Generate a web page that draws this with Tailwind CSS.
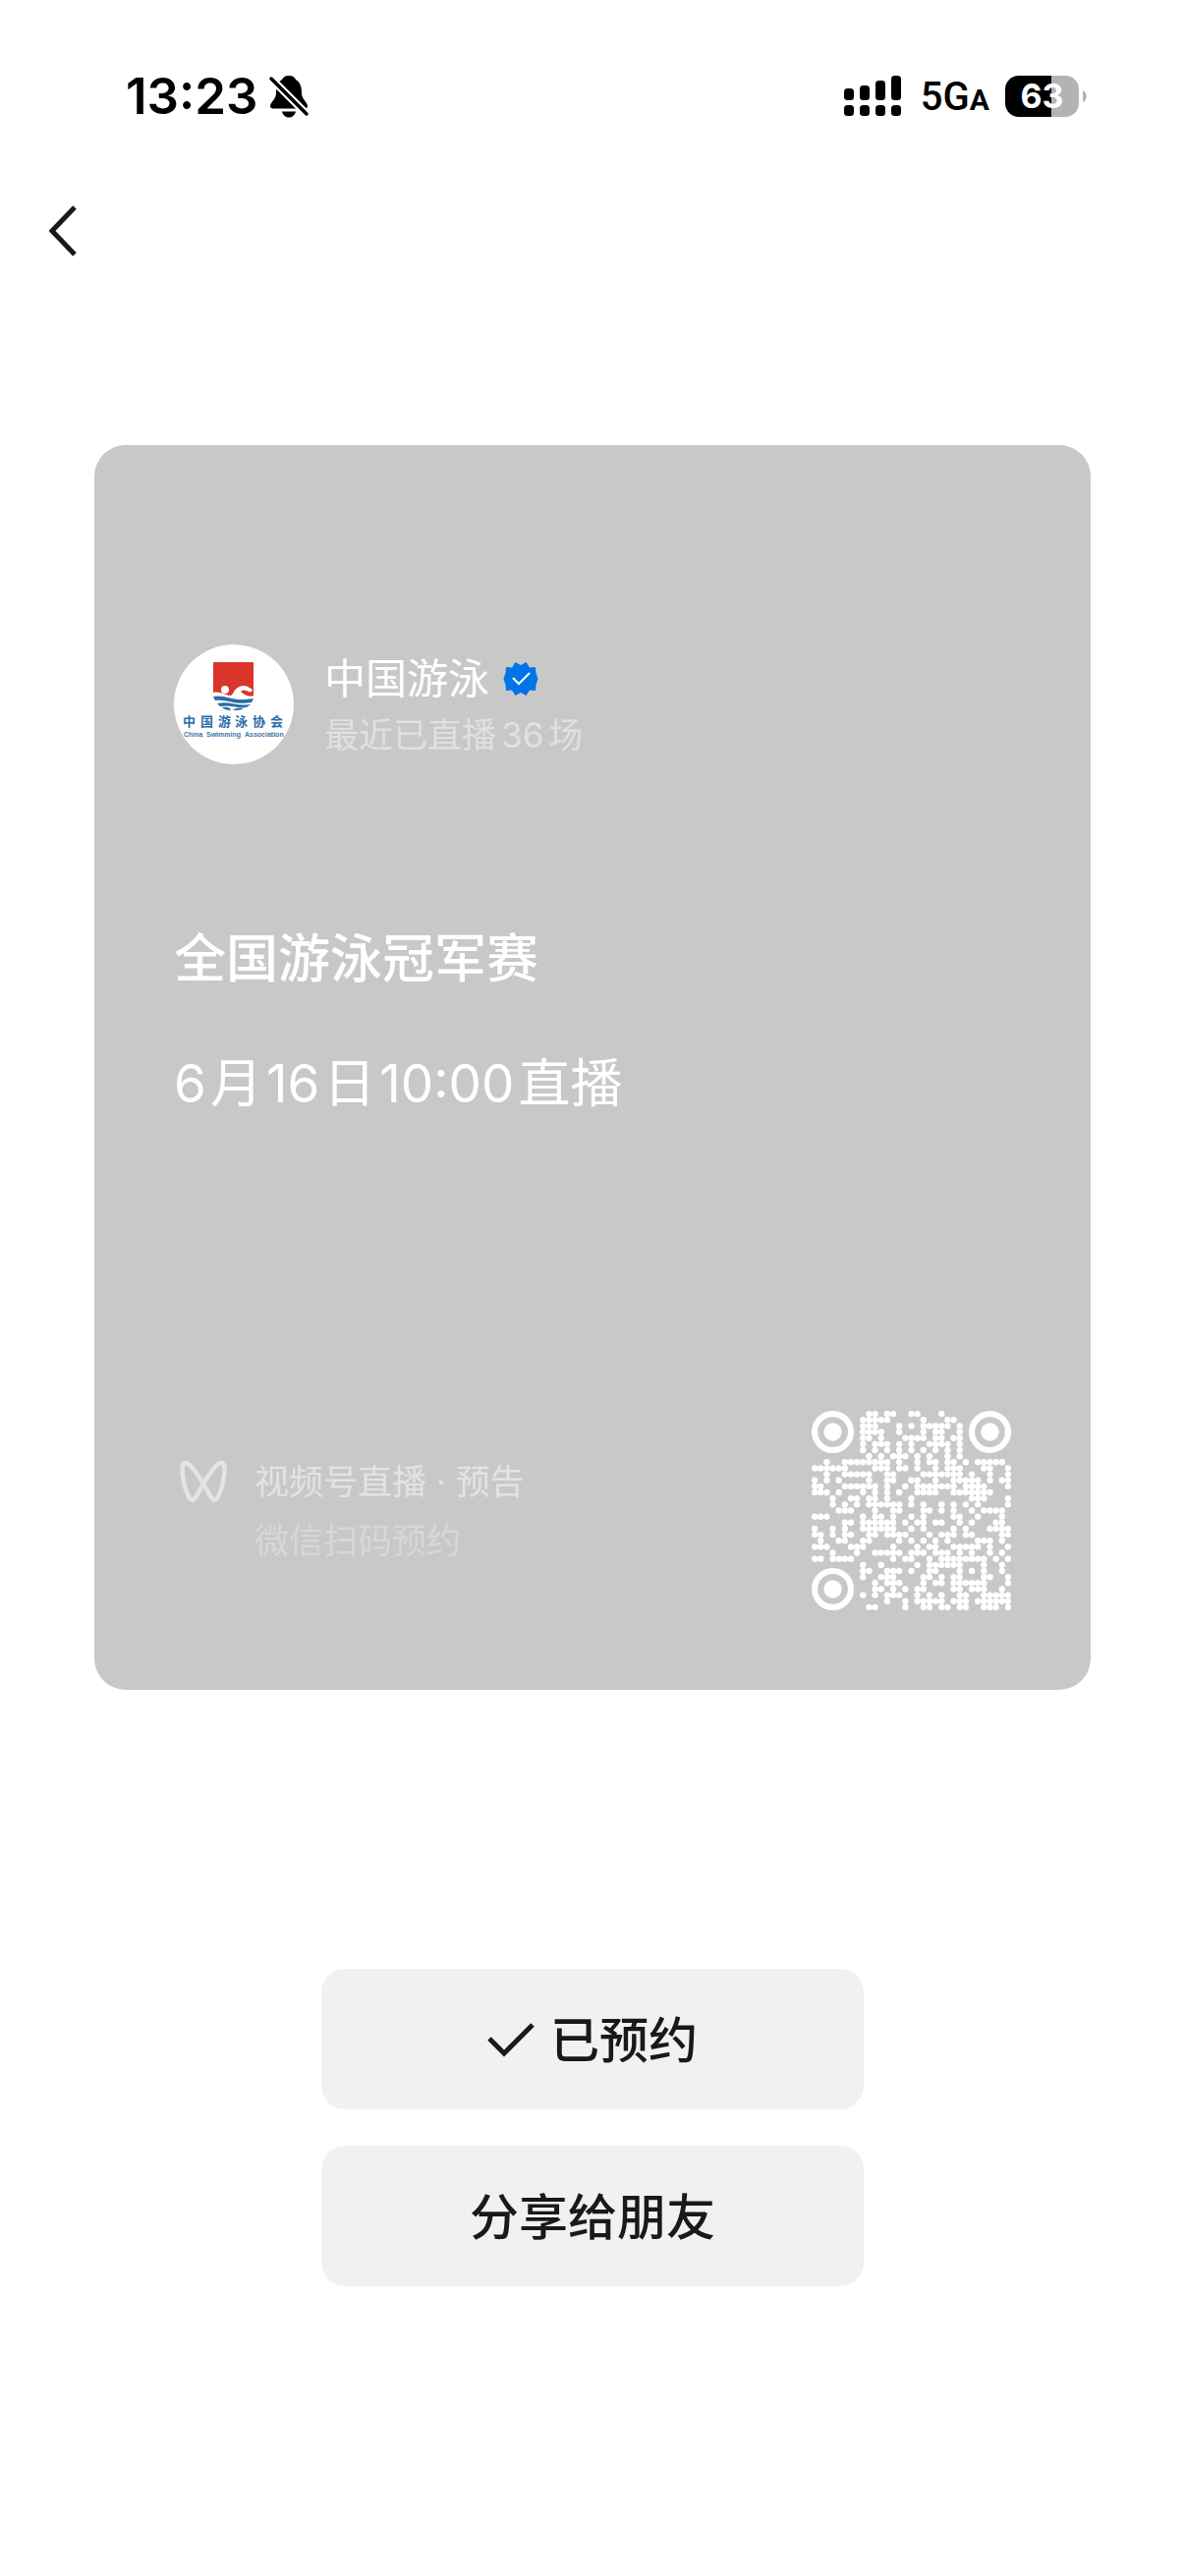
<!DOCTYPE html>
<html lang="zh-CN">
<head>
    <meta charset="UTF-8">
    <meta name="viewport" content="width=device-width, initial-scale=1.0">
    <title>直播预告</title>
    <script src="https://cdn.jsdelivr.net/npm/@tailwindcss/browser@4"></script>
</head>
<body class="bg-white min-h-screen font-['Inter','Noto_Sans_CJK_SC',sans-serif]">
    <!-- status bar -->
    <header class="flex items-center justify-between h-[196px] pl-32 pr-[100px] text-black">
        <div class="flex items-center gap-[10px]">
            <span class="text-[51px] leading-[60px] font-semibold">13:23</span>
            <svg class="w-[42px] h-11" viewBox="0 0 40 44">
                <path d="M20 1c-4 0-6 2-7 4C8 8 7 13 7 19c0 6-6 9-6 13 0 1.500 1 2.500 3 2.500h32c2 0 3-1 3-2.500 0-4-6-7-6-13 0-6-1-11-6-14-1-2-3-4-7-4z"/>
                <path d="M13 37.500h14c-1 4-4 6-7 6s-6-2-7-6z"/>
                <path d="M2 4l36 36" stroke="#fff" stroke-width="8"/>
                <path d="M2 4l36 36" stroke="#000" stroke-width="3.500" stroke-linecap="round"/>
            </svg>
        </div>
        <div class="flex items-center">
            <svg class="w-[58px] h-[42px] mr-5" viewBox="0 0 58 42">
                <rect x="0" y="13" width="10" height="12" rx="3.500"/>
                <rect x="16" y="10" width="10" height="15" rx="3.500"/>
                <rect x="32" y="5" width="10" height="20" rx="3.500"/>
                <rect x="48" y="0" width="10" height="25" rx="3.500"/>
                <rect x="0" y="30" width="10" height="11" rx="3.500"/>
                <rect x="16" y="30" width="10" height="11" rx="3.500"/>
                <rect x="32" y="30" width="10" height="11" rx="3.500"/>
                <rect x="48" y="30" width="10" height="11" rx="3.500"/>
            </svg>
            <span class="font-['Roboto'] font-medium text-[40px] leading-[48px] mr-4 pt-1">5G<span class="text-[30px] font-bold">A</span></span>
            <div class="flex items-center gap-1">
                <div class="flex items-center justify-center w-[75px] h-[42px] rounded-[14px] bg-linear-to-r from-black from-63% to-[#b3b3b3] to-63% text-white text-[34px] leading-[42px] font-bold">63</div>
                <svg class="w-1 h-3" viewBox="0 0 4 12"><path d="M0 0c5 2 5 10 0 12z" fill="#b3b3b3"/></svg>
            </div>
        </div>
    </header>

    <nav class="flex items-center h-[77px] pl-[50px]">
        <button aria-label="返回">
            <svg class="w-7 h-[52px]" viewBox="0 0 28 52" fill="none" stroke="#191919" stroke-width="5">
                <path d="M26 2L3 26l23 24"/>
            </svg>
        </button>
    </nav>

    <main class="flex flex-col px-24 pt-[180px]">
        <section class="flex flex-col bg-[#c8c8c8] rounded-[32px] text-white px-[81px] pt-[203px] pb-[81px]">
            <div class="flex items-center gap-[31px]">
                <svg class="w-[122px] h-[122px] shrink-0" viewBox="0 0 122 122">
                    <circle cx="61" cy="61" r="61" fill="#fff"/>
                    <path d="M40 18h41v34c-1 9-10 15-20 15-11 0-20-6-21-15z" fill="#d9352a"/>
                    <!-- swimmer and waves -->
                    <path d="M40 49c7-2 12 3 18 3l2-2c2-5 6-8 11-8 4 0 7 3 9 4-1 2-2 3-4 2-3-2-6-2-8 0 4 3 8 6 13 4v16H40z" fill="#fff"/>
                    <circle cx="52" cy="46" r="4" fill="#fff"/>
                    <path d="M40 53c13-3 18 6 41 2l-2 4c-17 3-25-4-37-2z" fill="#2a6ca6"/>
                    <path d="M44 60c12-3 20 3 34 1l-4 3c-10 1-18-3-27-1z" fill="#2a6ca6"/>
                    <path d="M49 64c4-1 9 0 9 3-4 0-7-1-9-3zM60 67c3-3 8-3 11-2-3 2-7 2-11 2z" fill="#2a6ca6"/>
                    <text y="83" font-size="13" font-weight="700" fill="#2a6ca6"><tspan x="9">中</tspan><tspan x="27">国</tspan><tspan x="45">游</tspan><tspan x="62">泳</tspan><tspan x="80">协</tspan><tspan x="98">会</tspan></text>
                    <text y="94" font-family="Liberation Sans" font-size="7" font-weight="700" fill="#3f77a8"><tspan x="10">China</tspan><tspan x="33">Swimming</tspan><tspan x="72">Association</tspan></text>
                </svg>
                <div class="flex flex-col pt-[2px]">
                    <div class="flex items-center gap-[14px]">
                        <h2 class="text-[42px] leading-[60px]">中国游泳</h2>
                        <svg class="w-9 h-9" viewBox="0 0 36 36">
                            <path d="M18 4l5.500-3 3.500 5.500 6-.5.500 6 .5 1.500 1.500 4.500-1.500 4.500-.5 1.500-.5 6-6-.5L23.500 35 18 32l-5.500 3L9 29.500 3 30l-.5-6-.5-1.500L.5 18 2 13.500l.5-1.500L3 6l6 .5L12.500 1z" fill="#0076e6"/>
                            <path d="M10 17l6 6 11-11" fill="none" stroke="#fff" stroke-width="2"/>
                        </svg>
                    </div>
                    <p class="flex gap-[5px] text-[35px] leading-[54px] text-white/45"><span>最近已直播</span><span>36</span><span>场</span></p>
                </div>
            </div>

            <h1 class="mt-40 text-[53px] leading-[76px] font-medium">全国游泳冠军赛</h1>
            <p class="flex gap-1 mt-[51px] text-[53px] leading-[76px]"><span>6</span><span>月</span><span>16</span><span>日</span><span>10:00</span><span>直播</span></p>

            <div class="flex items-end justify-between mt-[295px]">
                <div class="flex gap-7 pb-[41px] pl-[6px]">
                    <svg class="w-12 h-11 mt-2" viewBox="0 0 48 44" fill="none" stroke="#fff" stroke-opacity=".5" stroke-width="4.500" stroke-linejoin="round">
                        <path d="M24 24C18 15 11 3 6 3 2 3 2 9 3 16c1 8 4 18 7 23 2 3 4 2 6-1 3-4 5-9 8-14 6-9 13-21 18-21 4 0 4 6 3 13-1 8-4 18-7 23-2 3-4 2-6-1-3-4-5-9-8-14z"/>
                    </svg>
                    <div class="text-[35px] leading-[60px]">
                        <p class="text-white/50">视频号直播 · 预告</p>
                        <p class="text-white/30">微信扫码预约</p>
                    </div>
                </div>
                <svg id="qrcode" class="w-[203px] h-[203px] shrink-0" viewBox="0 0 33 33" fill="#fff" role="img" aria-label="二维码"></svg>
            </div>
        </section>

        <div class="flex flex-col items-center gap-[37px] pt-[284px] pb-20 text-[#191919] text-[50px] leading-[72px] font-medium">
            <button class="flex items-center justify-center gap-4 w-[552px] h-[143px] pt-[2px] rounded-3xl bg-[#f1f1f1]">
                <svg class="w-12 h-10" viewBox="0 0 48 40" fill="none" stroke="#191919" stroke-width="5">
                    <path d="M2 18l15 15L46 4"/>
                </svg>
                已预约
            </button>
            <button class="w-[552px] h-[143px] pt-[2px] rounded-3xl bg-[#f1f1f1]">分享给朋友</button>
        </div>
    </main>

    <script>
        // filled columns of each row, finder patterns are drawn separately
        const rows = [
            [9, 10, 12, 13, 16, 17, 21],
            [8, 9, 10, 11, 12, 18, 22, 23],
            [8, 9, 10, 14, 16, 18, 19, 20, 21, 22, 24],
            [8, 9, 10, 11, 14, 18, 20, 21, 24],
            [8, 9, 11, 15, 16, 17, 18, 20, 21, 23, 24],
            [8, 10, 11, 12, 14, 16, 19, 20, 21, 22, 24],
            [8, 10, 12, 14, 16, 18, 20, 22, 24],
            [9, 11, 13, 14, 15, 17, 19, 22, 24],
            [2, 5, 6, 7, 8, 9, 10, 11, 12, 14, 17, 19, 20, 22, 23, 25, 27, 28, 29, 30, 31],
            [0, 1, 2, 3, 4, 5, 10, 11, 12, 14, 15, 17, 20, 22, 23, 24, 28, 29, 32],
            [2, 5, 6, 7, 8, 9, 12, 13, 18, 19, 20, 21, 22, 23, 24, 26, 29, 32],
            [0, 2, 4, 9, 12, 13, 16, 17, 20, 23, 24, 25, 26, 27, 29, 31, 32],
            [0, 1, 5, 6, 7, 8, 9, 10, 12, 15, 17, 18, 19, 20, 21, 22, 23, 25, 26, 27, 28, 32],
            [0, 1, 2, 4, 8, 10, 12, 14, 17, 18, 19, 20, 23, 24, 25, 26, 27, 28, 29],
            [3, 6, 7, 9, 10, 12, 16, 26, 27, 28, 32],
            [3, 5, 7, 9, 10, 11, 12, 13, 14, 16, 18, 21, 23, 25, 27, 32],
            [4, 5, 6, 10, 13, 14, 18, 19, 21, 23, 26, 28, 29, 30, 31],
            [0, 1, 2, 8, 10, 11, 13, 16, 18, 23, 24, 27, 31],
            [5, 6, 8, 9, 10, 11, 12, 13, 15, 17, 18, 20, 21, 24, 26, 30, 31],
            [0, 3, 5, 8, 9, 10, 11, 12, 13, 16, 18, 23, 25, 29, 30, 31, 32],
            [0, 1, 3, 5, 6, 9, 10, 12, 13, 14, 15, 19, 21, 22, 23, 25, 26, 31, 32],
            [1, 4, 5, 8, 9, 14, 16, 18, 20, 22, 27, 28, 29, 31],
            [0, 1, 2, 6, 7, 8, 13, 17, 19, 20, 23, 24, 25, 26, 27, 29, 32],
            [3, 7, 10, 11, 12, 13, 14, 16, 17, 18, 20, 21, 22, 24, 26, 29, 31],
            [0, 1, 3, 4, 5, 6, 13, 15, 16, 19, 21, 22, 23, 24, 25, 26, 27, 28, 30, 32],
            [8, 11, 17, 19, 20, 21, 22, 23, 24, 28, 31],
            [8, 9, 12, 13, 14, 16, 19, 20, 24, 26, 28, 31],
            [8, 11, 12, 13, 18, 19, 21, 23, 24, 28, 29, 32],
            [10, 12, 13, 14, 18, 20, 21, 23, 24, 25, 26, 27, 28, 32],
            [10, 11, 13, 15, 17, 18, 23, 24, 26, 27, 28, 31],
            [8, 10, 12, 13, 14, 17, 19, 21, 24, 25, 28, 29, 30, 31, 32],
            [12, 15, 17, 18, 19, 20, 21, 23, 24, 25, 27, 28, 29, 30, 31, 32],
            [9, 10, 15, 18, 19, 21, 22, 24, 25, 28, 29, 30, 32]
        ];
        let dots = '';
        rows.forEach((cols, y) => {
            cols.forEach(x => {
                dots += `<circle cx="${x + 0.5}" cy="${y + 0.5}" r="0.52"/>`;
            });
        });
        [[3.5, 3.5], [29.5, 3.5], [3.5, 29.5]].forEach(([x, y]) => {
            dots += `<circle cx="${x}" cy="${y}" r="3" fill="none" stroke="#fff"/><circle cx="${x}" cy="${y}" r="1.5"/>`;
        });
        document.getElementById('qrcode').innerHTML = dots;
    </script>
</body>
</html>
